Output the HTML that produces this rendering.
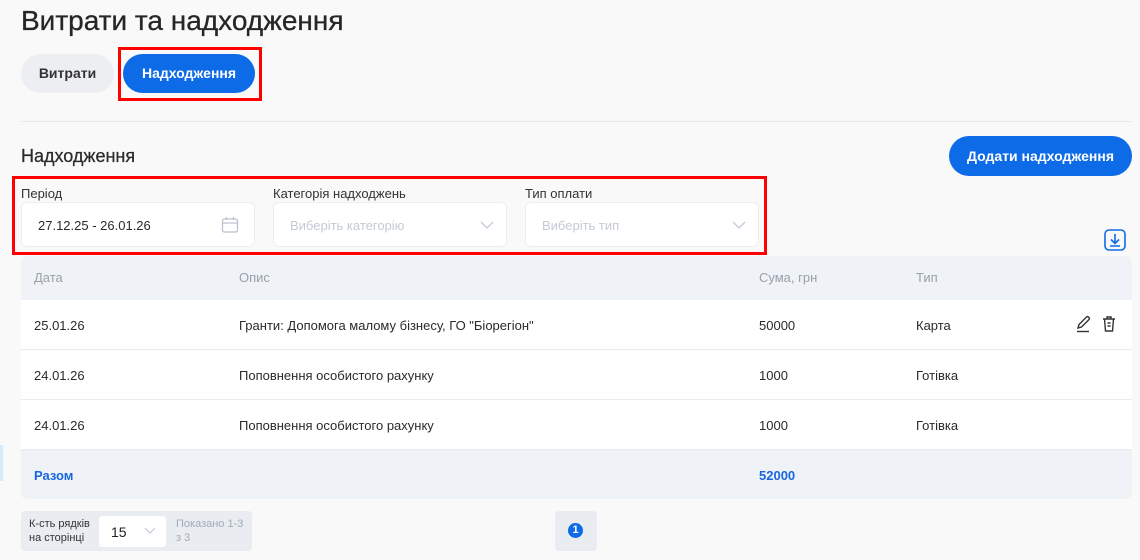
<!DOCTYPE html>
<html><head><meta charset="utf-8"><style>
*{box-sizing:border-box;margin:0;padding:0}
body{width:1140px;height:560px;background:#f9f9fa;font-family:"Liberation Sans",sans-serif;color:#222;position:relative;overflow:hidden}
.a{position:absolute}
.t{font-size:13px;white-space:nowrap}
.red{border:3px solid #f00}
.inp{background:#fff;border:1px solid #eceef2;border-radius:6px;height:45px}
.chev{position:absolute;right:12px;top:15px;width:14px;height:14px}
.hdr{color:#9aa0aa}
.row{position:absolute;left:21px;width:1111px;background:#fff;border-bottom:1px solid #e8ebef;height:50px}
.row span{position:absolute;top:18px;font-size:13px;color:#2a2a2a}
</style></head><body>
<div class="a" style="left:0;top:445px;width:3px;height:36px;background:#d6ecfa"></div>
<div class="a" style="left:21px;top:5px;font-size:28px;color:#262626;-webkit-text-stroke:0.3px #262626">Витрати та надходження</div>
<div class="a" style="left:21px;top:54px;width:93px;height:39px;border-radius:20px;background:#eceef2;font-size:14px;font-weight:bold;color:#333;text-align:center;line-height:39px">Витрати</div>
<div class="a red" style="left:118px;top:47px;width:144px;height:54px"></div>
<div class="a" style="left:123px;top:54px;width:132px;height:39px;border-radius:20px;background:#0d6be8;font-size:14px;font-weight:bold;color:#fff;text-align:center;line-height:39px">Надходження</div>
<div class="a" style="left:21px;top:121px;width:1111px;height:1px;background:#e6e8ec"></div>
<div class="a" style="left:21px;top:146px;font-size:18px;color:#2a2a2a;-webkit-text-stroke:0.25px #2a2a2a">Надходження</div>
<div class="a" style="left:949px;top:136px;width:183px;height:40px;border-radius:20px;background:#0d6be8;font-size:14px;font-weight:bold;color:#fff;text-align:center;line-height:40px">Додати надходження</div>
<div class="a red" style="left:12px;top:176px;width:755px;height:79px"></div>
<div class="a t" style="left:21px;top:186px;color:#333">Період</div>
<div class="a t" style="left:273px;top:186px;color:#333">Категорія надходжень</div>
<div class="a t" style="left:525px;top:186px;color:#333">Тип оплати</div>
<div class="a inp" style="left:21px;top:202px;width:234px"><span class="a t" style="left:16px;top:15px;color:#2a2a2a">27.12.25 - 26.01.26</span>
<svg class="a" style="left:199px;top:13px" width="18" height="18" viewBox="0 0 18 18" fill="none" stroke="#b8c2d0" stroke-width="1.3"><rect x="1.5" y="3" width="15" height="13" rx="2"/><path d="M1.5 7h15M5.5 1v3M12.5 1v3"/></svg></div>
<div class="a inp" style="left:273px;top:202px;width:234px"><span class="a t" style="left:16px;top:15px;color:#c3cad6">Виберіть категорію</span><svg class="chev" viewBox="0 0 14 14" fill="none" stroke="#c3cad6" stroke-width="1.3"><path d="M1 4l6 6 6-6"/></svg></div>
<div class="a inp" style="left:525px;top:202px;width:234px"><span class="a t" style="left:16px;top:15px;color:#c3cad6">Виберіть тип</span><svg class="chev" viewBox="0 0 14 14" fill="none" stroke="#c3cad6" stroke-width="1.3"><path d="M1 4l6 6 6-6"/></svg></div>
<svg class="a" style="left:1104px;top:229px" width="22" height="22" viewBox="0 0 22 22" fill="none" stroke="#0d6be8" stroke-width="1.6"><rect x="1" y="1" width="20" height="20" rx="4"/><path d="M11 5v9M7 10.5l4 4 4-4M6 17h10"/></svg>
<div class="a" style="left:21px;top:256px;width:1111px;height:44px;background:#eff2f6;border-radius:6px 6px 0 0"></div>
<span class="a t hdr" style="left:34px;top:270px">Дата</span>
<span class="a t hdr" style="left:239px;top:270px">Опис</span>
<span class="a t hdr" style="left:759px;top:270px">Сума, грн</span>
<span class="a t hdr" style="left:916px;top:270px">Тип</span>
<div class="row" style="top:300px"><span style="left:13px">25.01.26</span><span style="left:218px">Гранти: Допомога малому бізнесу, ГО "Біорегіон"</span><span style="left:738px">50000</span><span style="left:895px">Карта</span>
<svg class="a" style="left:1054px;top:15px" width="18" height="18" viewBox="0 0 18 18" fill="none" stroke="#333" stroke-width="1.4"><path d="M3 13l1-3.5 7.5-7.5a1.8 1.8 0 012.5 2.5L6.5 12z"/><path d="M2 16.5h12"/></svg>
<svg class="a" style="left:1080px;top:15px" width="16" height="18" viewBox="0 0 16 18" fill="none" stroke="#333" stroke-width="1.4"><path d="M2 4h12M6 4V2h4v2M3.5 4l1 12h7l1-12M6.5 8h3M6.5 11h3"/></svg></div>
<div class="row" style="top:350px"><span style="left:13px">24.01.26</span><span style="left:218px">Поповнення особистого рахунку</span><span style="left:738px">1000</span><span style="left:895px">Готівка</span></div>
<div class="row" style="top:400px"><span style="left:13px">24.01.26</span><span style="left:218px">Поповнення особистого рахунку</span><span style="left:738px">1000</span><span style="left:895px">Готівка</span></div>
<div class="a" style="left:21px;top:450px;width:1111px;height:49px;background:#eff2f6;border-radius:0 0 6px 6px"></div>
<span class="a t" style="left:34px;top:468px;color:#1a66e0;font-weight:bold">Разом</span>
<span class="a t" style="left:759px;top:468px;color:#1a66e0;font-weight:bold">52000</span>
<div class="a" style="left:21px;top:511px;width:231px;height:40px;background:#e9ecf1;border-radius:4px"></div>
<div class="a" style="left:29px;top:517px;font-size:11px;line-height:14px;color:#333">К-сть рядків<br>на сторінці</div>
<div class="a" style="left:99px;top:516px;width:67px;height:31px;background:#fff;border-radius:3px"><span class="a t" style="left:12px;top:8px;font-size:14px">15</span><svg class="a" style="left:45px;top:10px" width="12" height="10" viewBox="0 0 12 10" fill="none" stroke="#c3cad6" stroke-width="1.2"><path d="M1 2l5 5 5-5"/></svg></div>
<div class="a" style="left:176px;top:517px;font-size:11px;line-height:14px;color:#a5abb5">Показано 1-3<br>з 3</div>
<div class="a" style="left:555px;top:511px;width:42px;height:40px;background:#e9ecf1;border-radius:4px"></div>
<div class="a" style="left:568px;top:523px;width:15px;height:15px;border-radius:50%;background:#0d6be8;color:#fff;font-size:11px;font-weight:bold;text-align:center;line-height:15px">1</div>
</body></html>
